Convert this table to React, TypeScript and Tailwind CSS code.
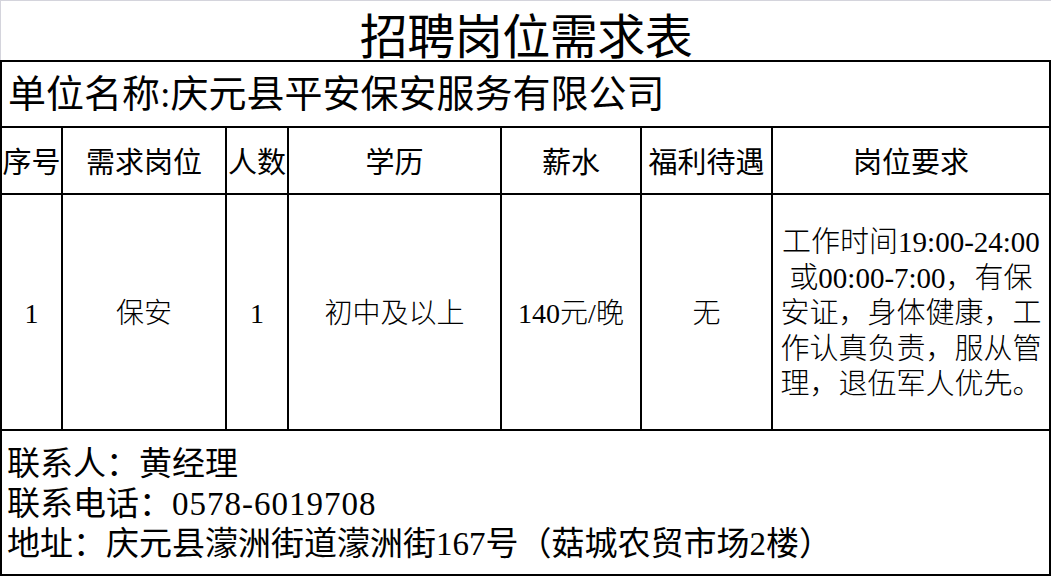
import React from "react";

const sans = "font-['Noto_Sans_CJK_SC',sans-serif]";
const mixed = "font-['Liberation_Serif','Noto_Sans_CJK_SC',serif]";

const headers = ["序号", "需求岗位", "人数", "学历", "薪水", "福利待遇", "岗位要求"];
const cells = ["1", "保安", "1", "初中及以上", "140元/晚", "无"];

export default function App() {
  return (
    <div className="w-[1051px] h-[576px] bg-white text-black overflow-hidden">
      {/* Title */}
      <div className="h-[60px] pt-[4px] border-l border-t border-[#d4d4dc] flex items-center justify-center">
        <h1 className={`${sans} text-[48px] leading-[50px] font-normal tracking-[-0.5px]`}>
          招聘岗位需求表
        </h1>
      </div>

      {/* Table */}
      <div className="border-2 border-black h-[516px] flex flex-col">
        <div className={`h-[66px] border-b-2 border-black flex items-center pl-[6px] ${mixed} text-[38px] leading-none`}>
          单位名称:庆元县平安保安服务有限公司
        </div>

        <div className="h-[67px] border-b-2 border-black grid grid-cols-[61px_164px_62px_213px_140px_131px_1fr]">
          {headers.map((h, i) => (
            <div
              key={h}
              className={`flex items-center justify-center ${sans} text-[29px] leading-none ${
                i < headers.length - 1 ? "border-r-2 border-black" : ""
              }`}
            >
              {h}
            </div>
          ))}
        </div>

        <div className="h-[236px] border-b-2 border-black grid grid-cols-[61px_164px_62px_213px_140px_131px_1fr]">
          {cells.map((c, i) => (
            <div
              key={i}
              className={`flex items-center justify-center border-r-2 border-black ${mixed} text-[28px] leading-none font-light pt-[4px]`}
            >
              {c}
            </div>
          ))}
          <div className={`flex items-center justify-center text-center ${mixed} text-[29px] leading-[35.5px] font-light pt-[4px]`}>
            <p>
              工作时间19:00-24:00
              <br />
              或00:00-7:00，有保
              <br />
              安证，身体健康，工
              <br />
              作认真负责，服从管
              <br />
              理，退伍军人优先。
            </p>
          </div>
        </div>

        <div className={`flex-1 flex flex-col justify-center pl-[5px] pt-[2px] ${mixed} text-[33px] leading-[40px]`}>
          <div>联系人：黄经理</div>
          <div>
            联系电话：<span className="tracking-[1px]">0578-6019708</span>
          </div>
          <div>地址：庆元县濛洲街道濛洲街167号（菇城农贸市场2楼）</div>
        </div>
      </div>
    </div>
  );
}
